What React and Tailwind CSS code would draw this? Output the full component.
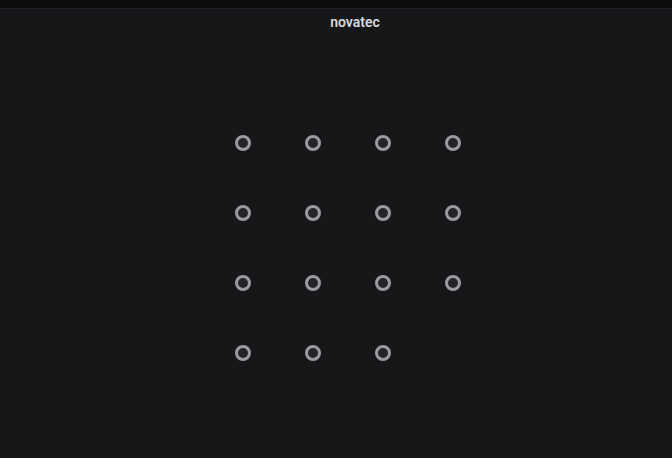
import React from 'react'

// 4x4 grid of status points, last one empty
const points = Array.from({ length: 15 }, (_, i) => i)

export default function App() {
  return (
    <div className="w-[672px] h-[458px] bg-[#161719] overflow-hidden" style={{ fontFamily: 'Roboto, "Liberation Sans", sans-serif' }}>
      {/* Top bar */}
      <div className="h-[9px] bg-[#0b0c0e] border-b border-[#222327]" />

      {/* Panel title */}
      <div className="h-[26px] flex items-center justify-center pl-[38px]">
        <span className="text-[14px] font-semibold text-[#d8d9da] leading-none">novatec</span>
      </div>

      {/* Points grid */}
      <div className="pt-[73px] pl-[208px]">
        <div className="grid grid-cols-[repeat(4,70px)] auto-rows-[70px]">
          {points.map((p) => (
            <div key={p} className="flex items-center justify-center">
              <div className="w-[16px] h-[16px] rounded-full border-[3px] border-[#9a9a9f] bg-[#232427]" />
            </div>
          ))}
        </div>
      </div>
    </div>
  )
}
